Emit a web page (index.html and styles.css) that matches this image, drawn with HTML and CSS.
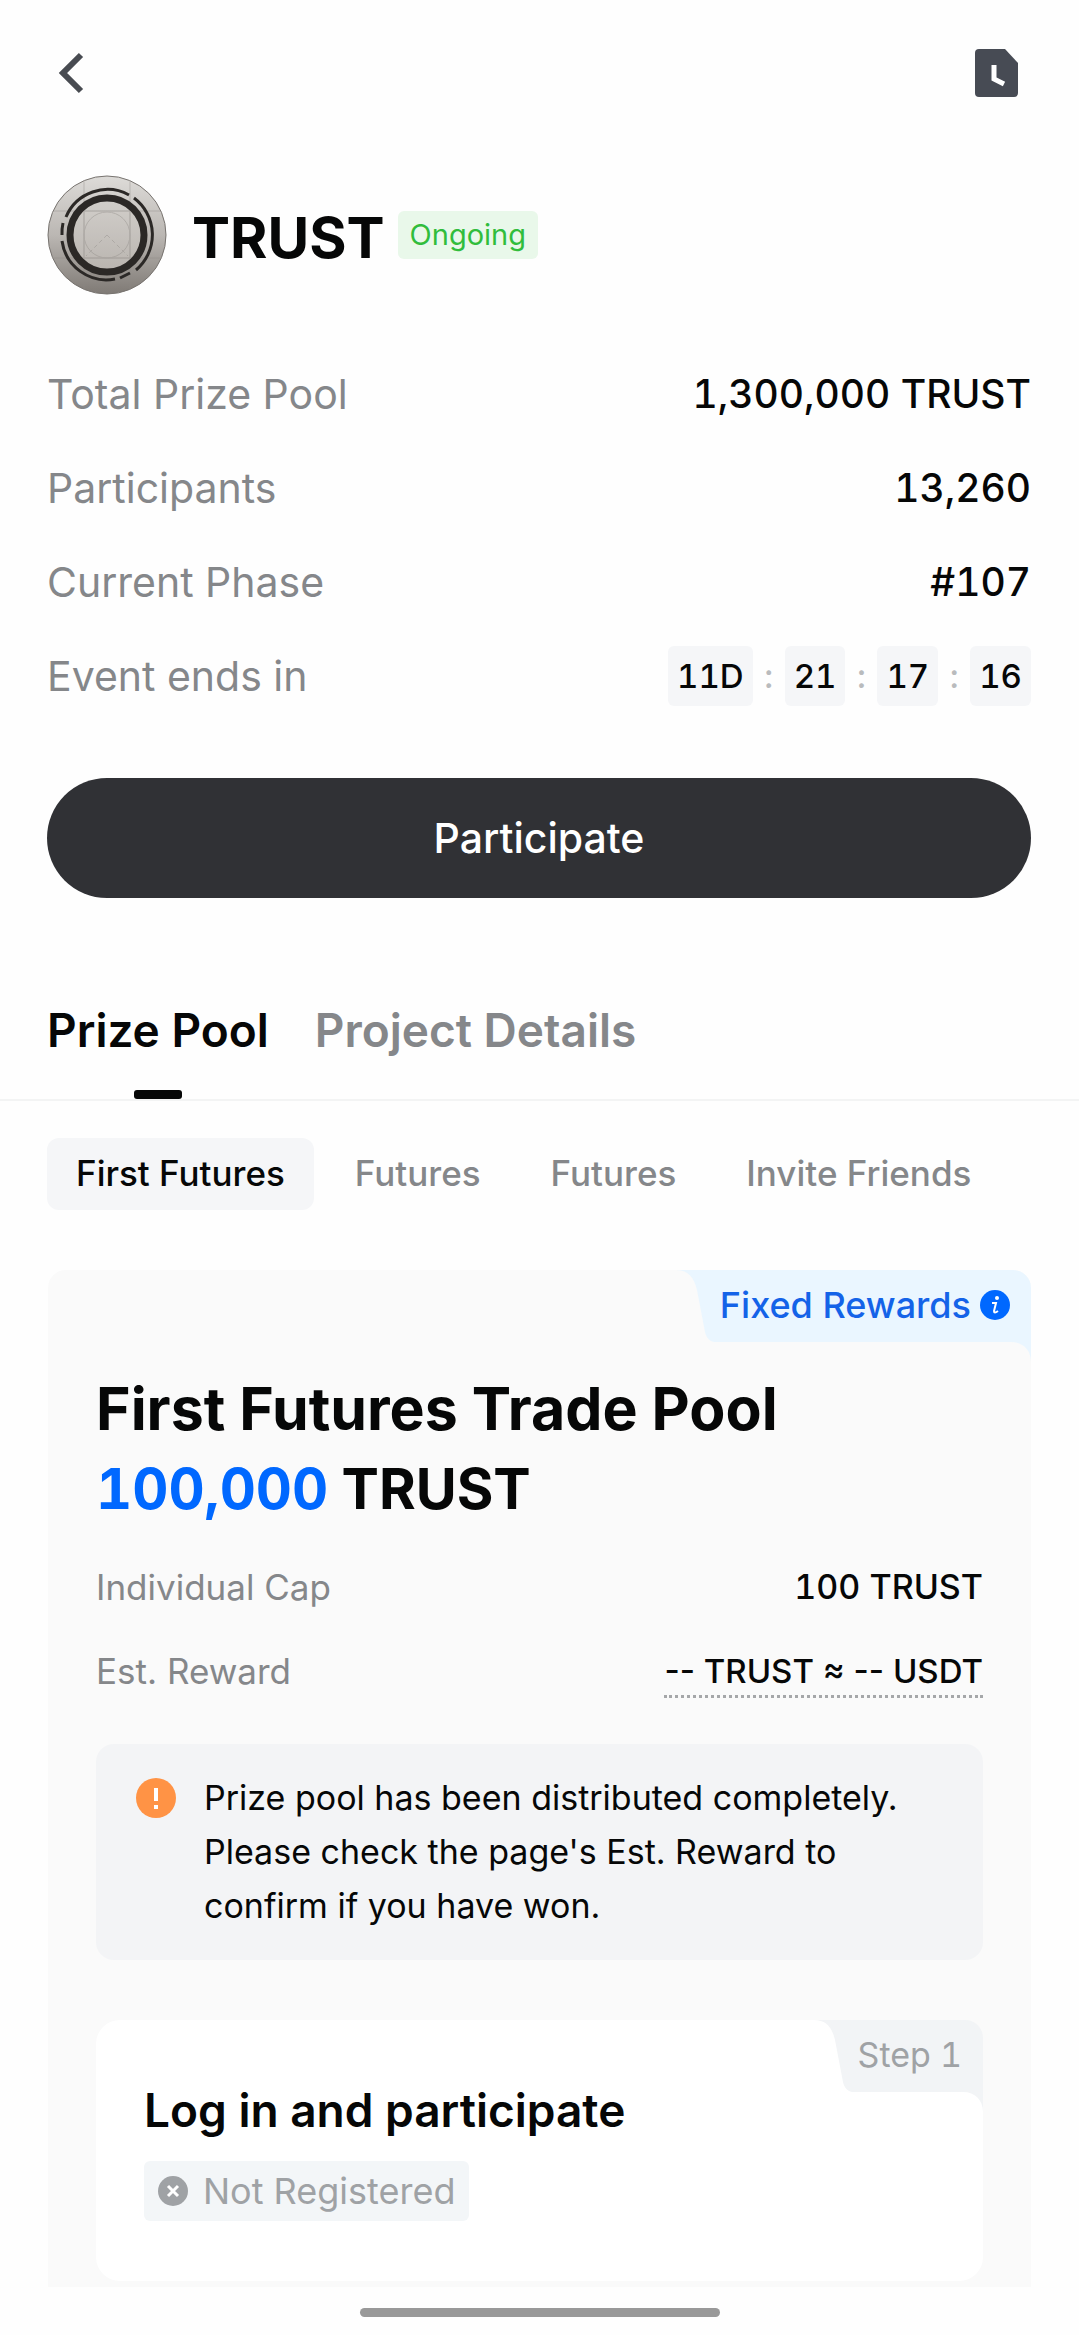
FILE: index.html
```html
<!DOCTYPE html>
<html lang="en">
<head>
    <meta charset="utf-8">
    <meta name="viewport" content="width=device-width, initial-scale=1">
    <title>TRUST Prize Pool</title>
    <link rel="stylesheet" href="styles.css">
</head>
<body>
    <header class="topbar">
        <button type="button" class="icon-btn" aria-label="Back">
            <svg width="48" height="48" viewBox="0 0 48 48"><path d="M33 6 15 24l18 18" fill="none" stroke="#484b51" stroke-width="6"/></svg>
        </button>
        <button type="button" class="icon-btn" aria-label="History">
            <svg width="48" height="48" viewBox="0 0 48 48">
                <path d="M4 0h26l13 14v30a4 4 0 0 1-4 4H4a4 4 0 0 1-4-4V4a4 4 0 0 1 4-4z" fill="#474b54"/>
                <path d="M19 16v14l10 5" fill="none" stroke="#fff" stroke-width="5"/>
            </svg>
        </button>
    </header>

    <section class="summary">
        <div class="project">
            <svg class="coin" viewBox="0 0 120 120">
                <defs>
                    <linearGradient id="metal" x1="0" y1="0" x2="0" y2="1">
                        <stop offset="0" stop-color="#dddbd8"/>
                        <stop offset="0.5" stop-color="#bbb7b3"/>
                        <stop offset="1" stop-color="#7f7a75"/>
                    </linearGradient>
                    <linearGradient id="face" x1="0" y1="0" x2="0" y2="1">
                        <stop offset="0" stop-color="#d2cfcb"/>
                        <stop offset="1" stop-color="#b9b4af"/>
                    </linearGradient>
                </defs>
                <circle cx="60" cy="60" r="59" fill="url(#metal)" stroke="#77736f"/>
                <circle cx="60" cy="60" r="37" fill="url(#face)"/>
                <g fill="none" stroke="#8d8985" stroke-width="1" opacity="0.4">
                    <path d="M37 6v108M83 6v108M6 36h108M6 83h108"/>
                    <path d="M60 60l21 21M60 60 39 81" stroke-dasharray="4 3"/>
                    <rect x="37" y="36" width="46" height="47"/>
                    <circle cx="60" cy="60" r="23"/>
                </g>
                <circle cx="60" cy="60" r="37" fill="none" stroke="#2b2826" stroke-width="7"/>
                <g fill="none" stroke="#2b2826" stroke-width="3">
                    <path d="M19 42A45 45 0 0 1 82 20"/>
                    <path d="M87 23A46 46 0 0 1 89 95"/>
                    <path d="M16 48a46 46 0 0 0-1 12"/>
                    <path d="M15 66A45 45 0 0 0 68 104"/>
                    <path d="M73 103l10-5"/>
                </g>
            </svg>
            <h1 class="project-name">TRUST</h1>
            <span class="status">Ongoing</span>
        </div>

        <dl class="stats">
            <div class="stat"><dt>Total Prize Pool</dt><dd>1,300,000 TRUST</dd></div>
            <div class="stat"><dt>Participants</dt><dd>13,260</dd></div>
            <div class="stat"><dt>Current Phase</dt><dd>#107</dd></div>
            <div class="stat">
                <dt>Event ends in</dt>
                <dd class="countdown">
                    <span class="unit">11D</span><i>:</i><span class="unit">21</span><i>:</i><span class="unit">17</span><i>:</i><span class="unit">16</span>
                </dd>
            </div>
        </dl>

        <button type="button" class="participate">Participate</button>
    </section>

    <nav class="tabs">
        <button type="button" class="tab active">Prize Pool</button>
        <button type="button" class="tab">Project Details</button>
    </nav>

    <nav class="pills">
        <button type="button" class="pill active">First Futures</button>
        <button type="button" class="pill">Futures</button>
        <button type="button" class="pill">Futures</button>
        <button type="button" class="pill">Invite Friends</button>
    </nav>

    <main class="pool">
        <div class="tag tag-blue">
            <svg class="tag-slant" viewBox="0 0 38 72"><path d="M0 0h38v72C33 71 30 67 29 62L21 20C18 7 12 0 0 0z"/></svg>
            <button type="button" class="tag-body">
                Fixed Rewards
                <svg width="30" height="30" viewBox="0 0 30 30">
                    <circle cx="15" cy="15" r="15" fill="#0068ff"/>
                    <circle cx="17" cy="8" r="2" fill="#fff"/>
                    <path d="M12 13h4l-2 8q0 3 4 0" fill="none" stroke="#fff" stroke-width="2"/>
                </svg>
            </button>
            <svg class="tag-curl" viewBox="0 0 20 20"><path d="M0 0h20v20C20 8 12 0 0 0z"/></svg>
        </div>

        <h2 class="pool-title">First Futures Trade Pool</h2>
        <p class="pool-amount"><span class="amount">100,000</span> TRUST</p>

        <dl class="details">
            <div class="detail"><dt>Individual Cap</dt><dd>100 TRUST</dd></div>
            <div class="detail"><dt>Est. Reward</dt><dd class="hint">-- TRUST ≈ -- USDT</dd></div>
        </dl>

        <div class="notice">
            <svg width="40" height="40" viewBox="0 0 40 40">
                <circle cx="20" cy="20" r="20" fill="#ff9345"/>
                <path d="M20 10v13M20 27v4" stroke="#fff" stroke-width="4"/>
            </svg>
            <p>Prize pool has been distributed completely. Please check the page's Est. Reward to confirm if you have won.</p>
        </div>

        <section class="step">
            <div class="tag tag-gray">
                <svg class="tag-slant" viewBox="0 0 38 72"><path d="M0 0h38v72C33 71 30 67 29 62L21 20C18 7 12 0 0 0z"/></svg>
                <span class="tag-body">Step 1</span>
                <svg class="tag-curl" viewBox="0 0 20 20"><path d="M0 0h20v20C20 8 12 0 0 0z"/></svg>
            </div>
            <h3 class="step-title">Log in and participate</h3>
            <span class="step-state">
                <svg width="30" height="30" viewBox="0 0 30 30">
                    <circle cx="15" cy="15" r="15" fill="#9fa2a5"/>
                    <path d="m10 10 10 10M20 10 10 20" stroke="#fff" stroke-width="3"/>
                </svg>
                Not Registered
            </span>
        </section>
    </main>

    <footer class="home-bar"><div class="home-handle"></div></footer>
</body>
</html>
```
FILE: styles.css
```css
* {
    box-sizing: border-box;
}

body {
    margin: 0;
    background-color: #fefefe;
    color: #060707;
    font-family: Inter, "Liberation Sans", Arial, sans-serif;
    font-size: 36px;
    line-height: 48px;
}

h1, h2, h3, p, dl, dd {
    margin: 0;
}

button {
    border: 0;
    padding: 0;
    background: none;
    color: inherit;
    font: inherit;
    cursor: pointer;
}

svg {
    display: block;
    flex: none;
}

.topbar {
    display: flex;
    justify-content: space-between;
    padding: 49px 56px 48px 48px;
}

.icon-btn {
    height: 48px;
}

.summary {
    padding: 30px 48px 0 47px;
}

.project {
    display: flex;
    align-items: center;
}

.coin {
    width: 120px;
    height: 120px;
}

.project-name {
    margin-left: 25px;
    padding-top: 5px;
    font-size: 57px;
    font-weight: 700;
    line-height: 72px;
}

.status {
    margin-left: 13px;
    padding: 0 12px;
    border-radius: 6px;
    background-color: #e9f8ea;
    color: #31bd3c;
    font-size: 29px;
}

.stats {
    display: flex;
    flex-direction: column;
    gap: 34px;
    padding-top: 69px;
}

.stat {
    display: flex;
    align-items: center;
    justify-content: space-between;
    font-size: 41px;
    line-height: 60px;
}

.stat dt,
.detail dt {
    color: #85878a;
}

.stat dd {
    font-size: 39px;
    font-weight: 500;
    font-feature-settings: "tnum";
}

.stat .countdown {
    display: flex;
    font-size: 33px;
}

.countdown .unit {
    padding: 0 9px;
    border-radius: 6px;
    background-color: #f5f6f8;
}

.countdown i {
    width: 32px;
    color: #b9bbbd;
    font-style: normal;
    text-align: center;
}

.participate {
    display: block;
    width: 100%;
    height: 120px;
    margin-top: 72px;
    border-radius: 60px;
    background-color: #303135;
    color: #fff;
    font-size: 41px;
    font-weight: 500;
}

.tabs {
    display: flex;
    gap: 46px;
    margin-top: 84px;
    padding: 0 47px;
    border-bottom: 2px solid #f3f4f4;
}

.tab {
    position: relative;
    height: 117px;
    padding-bottom: 22px;
    color: #85878a;
    font-size: 46px;
    font-weight: 600;
}

.tab.active {
    color: #060707;
}

.tab.active::after {
    content: "";
    position: absolute;
    bottom: 0;
    left: calc(50% - 24px);
    width: 48px;
    height: 9px;
    border-radius: 3px;
    background-color: #060707;
}

.pills {
    display: flex;
    gap: 12px;
    padding: 37px 47px 60px;
}

.pill {
    height: 72px;
    padding: 0 29px 2px;
    border-radius: 12px;
    color: #85878a;
    font-size: 35px;
    font-weight: 500;
}

.pill.active {
    background-color: #f5f6f8;
    color: #060707;
}

.pool {
    position: relative;
    margin: 0 48px;
    padding: 98px 48px 6px;
    border-radius: 18px 18px 0 0;
    background-color: #fafafa;
}

/* corner label with a slanted left edge and a curl under the right side */
.tag {
    position: absolute;
    top: 0;
    right: 0;
    display: flex;
    height: 72px;
}

.tag-slant {
    width: 38px;
    height: 72px;
}

.tag-body {
    display: flex;
    align-items: center;
    gap: 9px;
    padding: 0 21px 2px 6px;
    border-top-right-radius: 18px;
    font-feature-settings: "tnum";
}

.tag-curl {
    position: absolute;
    top: 100%;
    right: 0;
    width: 20px;
    height: 20px;
}

.tag-blue {
    fill: #eaf6ff;
    color: #1463e8;
    font-weight: 500;
}

.tag-blue .tag-body {
    background-color: #eaf6ff;
}

.tag-gray {
    fill: #f2f4f6;
    color: #9fa2a5;
    font-size: 34px;
}

.tag-gray .tag-body {
    background-color: #f2f4f6;
}

.pool-title,
.pool-amount {
    font-size: 59px;
    font-weight: 700;
    line-height: 81px;
}

.pool-amount {
    font-size: 56px;
}

.amount {
    color: #0068ff;
    font-feature-settings: "tnum";
}

.details {
    display: flex;
    flex-direction: column;
    gap: 36px;
    padding-top: 33px;
}

.detail {
    display: flex;
    justify-content: space-between;
    font-size: 35px;
}

.detail dd {
    font-size: 34px;
    font-weight: 500;
    font-feature-settings: "tnum";
}

.detail .hint {
    border-bottom: 3px dotted #a5a7a9;
    font-size: 33px;
    font-feature-settings: normal;
}

.notice {
    display: flex;
    gap: 28px;
    margin-top: 46px;
    padding: 27px 40px;
    border-radius: 18px;
    background-color: #f3f4f6;
    font-size: 34px;
    line-height: 54px;
}

.notice svg {
    margin-top: 7px;
}

.step {
    position: relative;
    margin-top: 60px;
    padding: 57px 48px 60px;
    border-radius: 24px;
    background-color: #fff;
}

.step-title {
    font-size: 46px;
    font-weight: 600;
    line-height: 66px;
}

.step-state {
    display: inline-flex;
    align-items: center;
    gap: 15px;
    margin-top: 18px;
    padding: 0 14px;
    border-radius: 6px;
    background-color: #f3f6f8;
    color: #9fa2a5;
    line-height: 60px;
}

.home-bar {
    padding: 21px 0 18px;
}

.home-handle {
    width: 360px;
    max-width: 50%;
    height: 9px;
    margin: 0 auto;
    border-radius: 5px;
    background-color: #999;
}
```
